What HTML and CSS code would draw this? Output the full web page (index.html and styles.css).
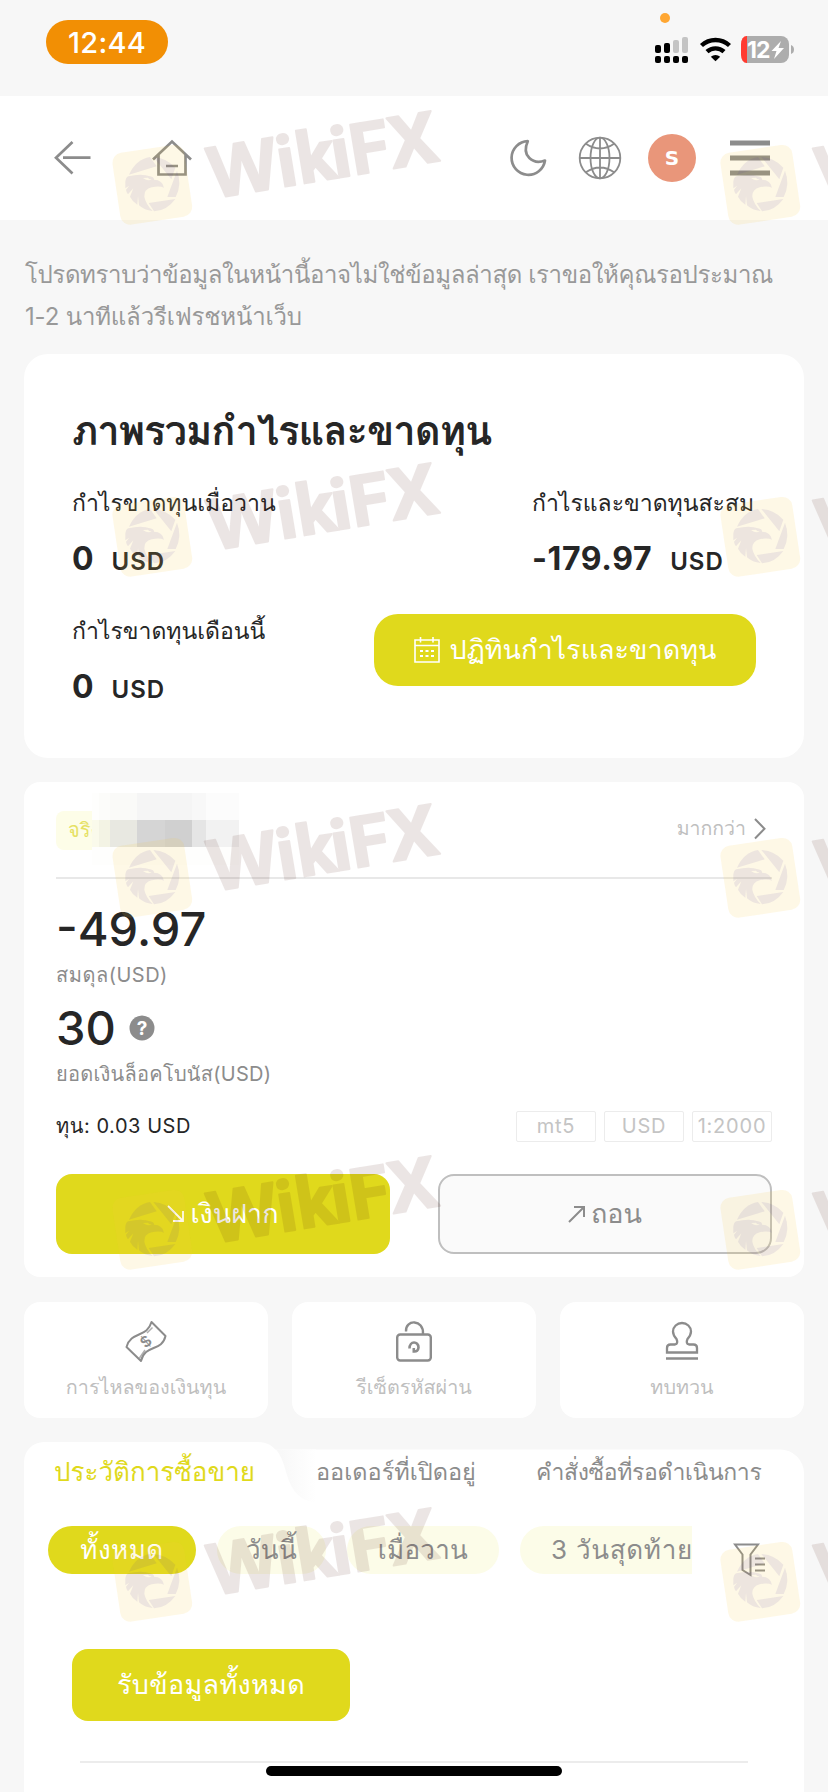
FILE: index.html
```html
<!DOCTYPE html>
<html lang="th">
<head>
<meta charset="utf-8">
<title>Account</title>
<link rel="stylesheet" href="styles.css">
</head>
<body>
<svg width="0" height="0" class="defs">
  <defs>
    <g id="eagle">
      <path d="M387 524 Q408 478 450 471 L470 499 Z"/>
      <path d="M460 471 Q500 474 526 503 L514 538 Z"/>
      <path d="M531 512 Q547 552 527 591 L502 591 Z"/>
      <path d="M446 609 L526 597 Q500 633 462 634 Z"/>
      <path fill-rule="evenodd" d="M376 550 Q376 532 385 529 Q425 520 450 529 Q463 531 462 539 Q488 540 492 563 Q478 556 455 562 Q432 568 433 590 Q437 612 458 633 Q433 631 417 616 L414 588 L412 614 Q398 606 390 590 L400 565 L384 583 Q379 577 378 569 L388 557 L376 565 Z M429 534 Q445 546 456 537 Q448 539 444 533 Z"/>
    </g>
    <g id="mark">
      <g transform="rotate(-8.5 152.3 184.7)"><rect class="wm-box" x="116" y="148.5" width="72.6" height="72.6" rx="10"/></g>
      <use href="#eagle" class="wm-bird" transform="scale(.33333)"/>
      <text class="wm-text" transform="translate(213 198.5) rotate(-9.4)" x="0 69 89 124 143 183" y="0"><tspan class="wide">W</tspan>ikiF<tspan class="wide">X</tspan></text>
    </g>
  </defs>
</svg>

<div class="status">
  <span class="clock">12:44</span>
  <svg class="status-icons" width="150" height="60" viewBox="650 10 150 60">
    <circle cx="665" cy="18" r="5" fill="#ffa733"/>
    <g fill="#000"><rect x="655" y="45" width="6" height="8" rx="2"/><rect x="664" y="43" width="6" height="10" rx="2"/><rect x="655" y="56" width="6" height="7" rx="2"/><rect x="664" y="56" width="6" height="7" rx="2"/><rect x="673" y="56" width="6" height="7" rx="2"/><rect x="682" y="56" width="6" height="7" rx="2"/></g>
    <g fill="#c4c4c4"><rect x="673" y="40" width="6" height="13" rx="2"/><rect x="682" y="37" width="6" height="16" rx="2"/></g>
    <g fill="none" stroke="#000" stroke-width="4.4"><path d="M701.5 45.5a20.5 20.5 0 0 1 28 0"/><path d="M707 51.7a12.5 12.5 0 0 1 17 0"/></g>
    <path d="M710.8 56.8a7 7 0 0 1 9.4 0l-4.7 4.4z"/>
    <path d="M747 36h34a8 8 0 0 1 8 8v11a8 8 0 0 1-8 8h-34z" fill="#adadad"/>
    <path d="M747 36h-0.5a5.5 8 0 0 0-5.5 8v11a5.5 8 0 0 0 5.5 8h.5z" fill="#ff3b30"/>
    <path d="M791 45q3 1 3 4.500t-3 4.500z" fill="#adadad"/>
    <text x="747" y="58" class="batt">12</text>
    <path d="M781 41l-9.500 10h5l-2.500 8 10-11h-5.500z" fill="#fff"/>
  </svg>
</div>

<header class="nav">
  <svg width="828" height="124" viewBox="0 96 828 124" fill="none" stroke="#8c8c8c" stroke-width="2.700">
    <path d="M72.500 142L56 157.700 72.500 173.500M63 157.700H90.500"/>
    <path d="M153 159.500L172 141.500 191 159.500M158.500 154.500V174.500H185.500V154.500M166 166H178"/>
    <path d="M527.800 141.200A16.800 16.800 0 1 0 545 160.500C533 165 521 156 527.800 141.200Z" stroke-linejoin="round"/>
    <g stroke-width="1.800"><circle cx="600" cy="158" r="20.300"/><ellipse cx="600" cy="158" rx="9.500" ry="20.300"/><path d="M600 137.500V178.500M579.500 158H620.500M585.500 143.500Q600 153.500 614.500 143.500M585.500 172.500Q600 162.500 614.500 172.500"/></g>
    <circle cx="672" cy="158" r="24" fill="#e9967a" stroke="none"/>
    <text x="672" y="164.500" class="avatar">S</text>
    <path d="M730 143H770M730 158H770M730 173H770" stroke-width="5"/>
  </svg>
</header>

<main class="page">
  <p class="notice"><span class="n1">โปรดทราบว่าข้อมูลในหน้านี้อาจไม่ใช่ข้อมูลล่าสุด เราขอให้คุณรอประมาณ</span><br><span class="n2">1-2 นาทีแล้วรีเฟรชหน้าเว็บ</span></p>

  <section class="card overview">
    <h1>ภาพรวมกำไรและขาดทุน</h1>
    <div class="row">
      <div class="stat"><div class="label">กำไรขาดทุนเมื่อวาน</div><div class="value">0<small>USD</small></div></div>
      <div class="stat total"><div class="label">กำไรและขาดทุนสะสม</div><div class="value"><span class="loss">-179.97</span><small>USD</small></div></div>
    </div>
    <div class="row second">
      <div class="stat"><div class="label">กำไรขาดทุนเดือนนี้</div><div class="value">0<small>USD</small></div></div>
      <div class="btn calendar">
        <svg width="26" height="26" viewBox="0 0 26 26" fill="none" stroke="#fff" stroke-width="1.600"><path d="M1 3H25V25H1ZM1 8.500H25M6.500 0V5.500M19 0V5.500"/><path d="M6 14h3M11.500 14h3M17 14h3M6 19h3M11.500 19h3M17 19h3" stroke-width="2.200"/></svg>
        <span>ปฏิทินกำไรและขาดทุน</span>
      </div>
    </div>
  </section>

  <section class="card account">
    <div class="acc-head">
      <span class="badge">จริง</span>
      <span class="more"><span>มากกว่า</span><svg width="12" height="22" viewBox="0 0 12 22" fill="none" stroke="#8c8c8c" stroke-width="2"><path d="M1 1L10.500 10.700 1 20.500"/></svg></span>
      <svg class="mosaic" width="147" height="72" viewBox="276 0 441 216" preserveAspectRatio="none" shape-rendering="crispEdges">
        <rect x="276" width="441" height="216" fill="#fefefd"/>
        <rect x="297" width="33" height="81" fill="#fcfcfa"/><rect x="330" width="81" height="81" fill="#fafaf8"/><rect x="411" width="165" height="81" fill="#f5f5f5"/><rect x="576" width="42" height="81" fill="#f8f8f8"/><rect x="618" width="99" height="81" fill="#fcfcfc"/>
        <rect x="276" y="81" width="21" height="81" fill="#fafaeb"/><rect x="297" y="81" width="33" height="81" fill="#f3f3e4"/><rect x="330" y="81" width="81" height="81" fill="#e8e8e1"/><rect x="411" y="81" width="83" height="81" fill="#d5d5d5"/><rect x="494" y="81" width="82" height="81" fill="#d0d0d0"/><rect x="576" y="81" width="42" height="81" fill="#e5e5e5"/><rect x="618" y="81" width="99" height="81" fill="#f2f2f2"/>
      </svg>
    </div>
    <div class="big b1">-49.97</div>
    <div class="sub s1">สมดุล(USD)</div>
    <div class="big b2">30<svg width="26" height="26" viewBox="0 0 26 26"><circle cx="13" cy="13" r="12.500" fill="#8c8c8c"/><text x="13" y="19.500" class="qmark">?</text></svg></div>
    <div class="sub s2">ยอดเงินล็อคโบนัส(USD)</div>
    <div class="equity"><span>ทุน: 0.03 USD</span><div class="chips"><i>mt5</i><i>USD</i><i>1:2000</i></div></div>
    <div class="actions">
      <div class="btn deposit"><svg width="18" height="18" viewBox="0 0 18 18" fill="none" stroke="#fff" stroke-width="1.800"><path d="M1 1L16 16M6 16H16V6"/></svg><span>เงินฝาก</span></div>
      <div class="btn withdraw"><svg width="18" height="18" viewBox="0 0 18 18" fill="none" stroke="#8c8c8c" stroke-width="2"><path d="M1 17L16 2M6 2H16V12"/></svg><span>ถอน</span></div>
    </div>
  </section>

  <section class="tiles">
    <div class="tile"><svg width="42" height="44" viewBox="125 1320 42 44" fill="none" stroke="#8c8c8c" stroke-width="2" stroke-linejoin="round"><path d="M151.500 1322L165.500 1336C162 1352 145 1344 141 1361L126.500 1347C131 1331 147 1338 151.500 1322Z"/><path d="M152.500 1327.500L147 1333M139.500 1358L145 1350" stroke-width="1.500" opacity=".7"/><text x="145.800" y="1347" transform="rotate(-42 145.800 1341.500)" class="coin">$</text></svg><span>การไหลของเงินทุน</span></div>
    <div class="tile"><svg width="42" height="44" viewBox="393 1320 42 44" fill="none" stroke="#8c8c8c" stroke-width="2.400"><rect x="397.200" y="1334.500" width="33.600" height="26" rx="3"/><path d="M406 1331.500C405 1319 424 1319 423 1334"/><path d="M409.500 1348.500C409.500 1340.500 418.500 1341 418.500 1347.500Q418 1352 413.800 1351.500V1348" stroke-width="2.600"/></svg><span>รีเซ็ตรหัสผ่าน</span></div>
    <div class="tile"><svg width="42" height="44" viewBox="661 1320 42 44" fill="none" stroke="#8c8c8c" stroke-width="2.300"><path d="M667 1352.500V1348Q667 1344.500 670.500 1344.500H675Q678.500 1343.500 676.500 1339Q673 1335 673 1331.500A9 8.500 0 0 1 691 1331.500Q691 1335 687.500 1339Q685.500 1343.500 689 1344.500H693.500Q697 1344.500 697 1348V1352.500ZM666 1358.500H698"/></svg><span>ทบทวน</span></div>
  </section>

  <section class="history">
    <svg class="tabshape" width="780" height="70" viewBox="24 1442 780 70">
      <defs><linearGradient id="fold" x1="0" y1="0" x2="1" y2="0"><stop offset="0" stop-color="#f7f7f7"/><stop offset="1" stop-color="#ffffff"/></linearGradient></defs>
      <path d="M270 1449.500H780A24 24 0 0 1 804 1473.500V1512H24V1500H270Z" fill="#fff"/>
      <path d="M276 1449.500H316V1502C296 1501 290 1485 286 1472Q282 1456 276 1449.500Z" fill="url(#fold)"/>
      <path d="M24 1512V1462A20 20 0 0 1 44 1442H258C276 1442 280 1456 284 1472C290 1495 300 1502 320 1502V1512Z" fill="#fff"/>
    </svg>
    <div class="tabs"><div class="t1">ประวัติการซื้อขาย</div><div class="t2">ออเดอร์ที่เปิดอยู่</div><div class="t3">คำสั่งซื้อที่รอดำเนินการ</div></div>
    <div class="filters">
      <div class="pills"><b class="on p1">ทั้งหมด</b><b class="p2">วันนี้</b><b class="p3">เมื่อวาน</b><b class="p4">3 วันสุดท้าย</b></div>
      <svg width="34" height="36" viewBox="732 1542 34 36" fill="none" stroke="#8c8c8c" stroke-width="2"><path d="M735 1544.500H758L750.500 1554.500V1575L742.500 1570V1554.500ZM755 1558.500H765M755 1564.500H765M755 1570.500H765"/></svg>
    </div>
    <div class="btn all">รับข้อมูลทั้งหมด</div>
    <div class="rule"></div>
  </section>
</main>

<div class="home"></div>
<svg class="watermark" width="828" height="1792" viewBox="0 0 828 1792">
  <use href="#mark"/><use href="#mark" x="608"/>
  <use href="#mark" y="352"/><use href="#mark" x="608" y="352"/>
  <use href="#mark" y="693"/><use href="#mark" x="608" y="693"/>
  <use href="#mark" y="1045"/><use href="#mark" x="608" y="1045"/>
  <use href="#mark" y="1397"/><use href="#mark" x="608" y="1397"/>
</svg>
</body>
</html>
```
FILE: styles.css
```css
* { box-sizing: border-box; }
body { margin: 0; width: 828px; height: 1792px; overflow: hidden; position: relative; background: #f7f7f7; color: #262626; font-family: Inter, Loma, sans-serif; white-space: nowrap; }
svg { display: block; flex: none; }
.defs { position: absolute; }
.status { height: 96px; display: flex; justify-content: space-between; padding: 20px 28px 0 46px; }
.clock { width: 122px; height: 44px; border-radius: 22px; background: #f28f04; color: #fff; font-size: 29px; font-weight: 500; line-height: 45px; text-align: center; letter-spacing: .2px; }
.status-icons { margin-top: -10px; }
.batt { font: 700 23px Inter, sans-serif; fill: #fff; letter-spacing: -1px; }
.nav { height: 124px; background: #fff; }
.avatar { font: 700 20px "DejaVu Sans", sans-serif; fill: #fff; stroke: none; text-anchor: middle; }
.page { padding: 0 24px; }
.notice { margin: 0; padding: 34px 0 0 1px; font-size: 24px; line-height: 42px; color: #999; height: 133.500px; }
.n1 { letter-spacing: -.38px; }
.n2 { letter-spacing: -.18px; }
.card { background: #fff; }
.overview { height: 404px; border-radius: 24px; padding: 49px 48px 0; }
h1 { margin: 0 0 24px; font-size: 40px; line-height: 56px; font-weight: 700; letter-spacing: -1.050px; }
.row { display: flex; justify-content: space-between; }
.label { font-size: 23px; line-height: 40px; }
.value { margin-top: 16px; font-size: 32px; line-height: 40px; font-weight: 700; }
.value small { font-size: 24px; font-weight: 600; margin-left: 18px; letter-spacing: 1px; }
.loss { letter-spacing: .6px; }
.total { width: 224px; }
.second { margin-top: 29px; }
.btn { background: #e0d91c; color: #fff; display: flex; align-items: center; justify-content: center; font-size: 27px; }
.calendar { width: 382px; height: 72px; border-radius: 24px; gap: 10px; margin-top: 3px; }
.account { margin-top: 24px; height: 495px; border-radius: 16px; padding: 0 32px; }
.acc-head { height: 97px; position: relative; border-bottom: 2px solid #e8e8e8; display: flex; justify-content: space-between; padding-top: 29px; }
.badge { width: 64px; height: 39px; border-radius: 8px; background: #fdfde8; color: #e6e164; font-size: 20px; line-height: 39px; padding-left: 12px; }
.more { height: 36px; display: flex; align-items: center; gap: 8px; padding-right: 6px; font-size: 19.500px; color: #bfbfbf; }
.mosaic { position: absolute; left: 36px; top: 11px; }
.big { font-size: 47px; font-weight: 500; line-height: 56px; display: flex; align-items: center; }
.b1 { margin-top: 22px; }
.b2 { margin-top: 9px; gap: 13px; }
.qmark { font: 700 19px Inter, sans-serif; fill: #fff; text-anchor: middle; }
.sub { font-size: 20px; line-height: 32px; color: #8c8c8c; margin-top: 2px; }
.s1 { letter-spacing: .5px; }
.s2 { letter-spacing: .25px; }
.equity { display: flex; justify-content: space-between; font-size: 20px; line-height: 30px; margin-top: 21px; height: 32px; letter-spacing: .55px; }
.chips { display: flex; gap: 8px; color: #c4c4c4; letter-spacing: .8px; }
.chips i { font-style: normal; width: 80px; height: 31px; border: 1.500px solid #ececec; border-radius: 2px; text-align: center; line-height: 28px; }
.actions { display: flex; justify-content: space-between; margin-top: 31px; }
.actions .btn { width: 334px; height: 80px; border-radius: 16px; gap: 5px; }
.actions .withdraw { background: #fafafa; border: 2px solid #bfbfbf; color: #8c8c8c; }
.tiles { margin-top: 25px; display: grid; grid-template-columns: repeat(3, 244px); gap: 24px; }
.tile { height: 116px; border-radius: 16px; background: #fff; display: flex; flex-direction: column; align-items: center; padding-top: 18px; font-size: 19.800px; line-height: 30px; color: #bfbfbf; gap: 8px; }
.history { position: relative; margin-top: 24px; height: 350px; padding-top: 70px; background: linear-gradient(#fff, #fff) 0 70px no-repeat; }
.tabshape { position: absolute; left: 0; top: 0; }
.tabs { position: absolute; left: 30px; top: 10px; display: flex; font-size: 23.500px; line-height: 40px; color: #8c8c8c; }
.t1 { width: 262px; color: #e0d91c; font-size: 26px; font-weight: 500; }
.t2 { width: 220px; }
.t3 { font-size: 23px; letter-spacing: -.35px; }
.filters { display: flex; justify-content: space-between; padding: 14px 38px 0 24px; }
.pills { display: flex; gap: 21px; width: 644px; overflow: hidden; }
.pills b { flex: none; font-weight: 400; font-size: 26px; line-height: 48px; height: 48px; border-radius: 24px; background: #fcfce8; color: #8c8c8c; text-align: center; letter-spacing: .3px; }
.pills .on { background: #e0d91c; color: #fff; letter-spacing: .5px; }
.p1 { width: 148px; } .p2 { width: 109px; } .p3 { width: 152px; }
.pills .p4 { width: 204px; letter-spacing: .7px; }
.filters svg { margin-top: 16px; }
.all { width: 278px; height: 72px; border-radius: 16px; margin: 71px 0 0 48px; letter-spacing: .3px; }
.rule { height: 2px; background: #ececec; margin: 40px 56px 0; }
.home { position: absolute; left: 266px; top: 1766px; width: 296px; height: 10px; border-radius: 5px; background: #000; }
.watermark { position: absolute; left: 0; top: 0; pointer-events: none; }
.wm-box { fill: rgba(245, 200, 60, .13); }
.wm-bird { fill: rgba(70, 40, 160, .09); }
.wm-text { font: 700 71px Roboto, sans-serif; fill: #460a00; stroke: #460a00; stroke-width: 2px; stroke-linejoin: round; opacity: .1; }
.wide { font-family: "Noto Sans", sans-serif; }
.coin { font: 600 15px Inter, sans-serif; fill: #8c8c8c; stroke: none; text-anchor: middle; }
```
